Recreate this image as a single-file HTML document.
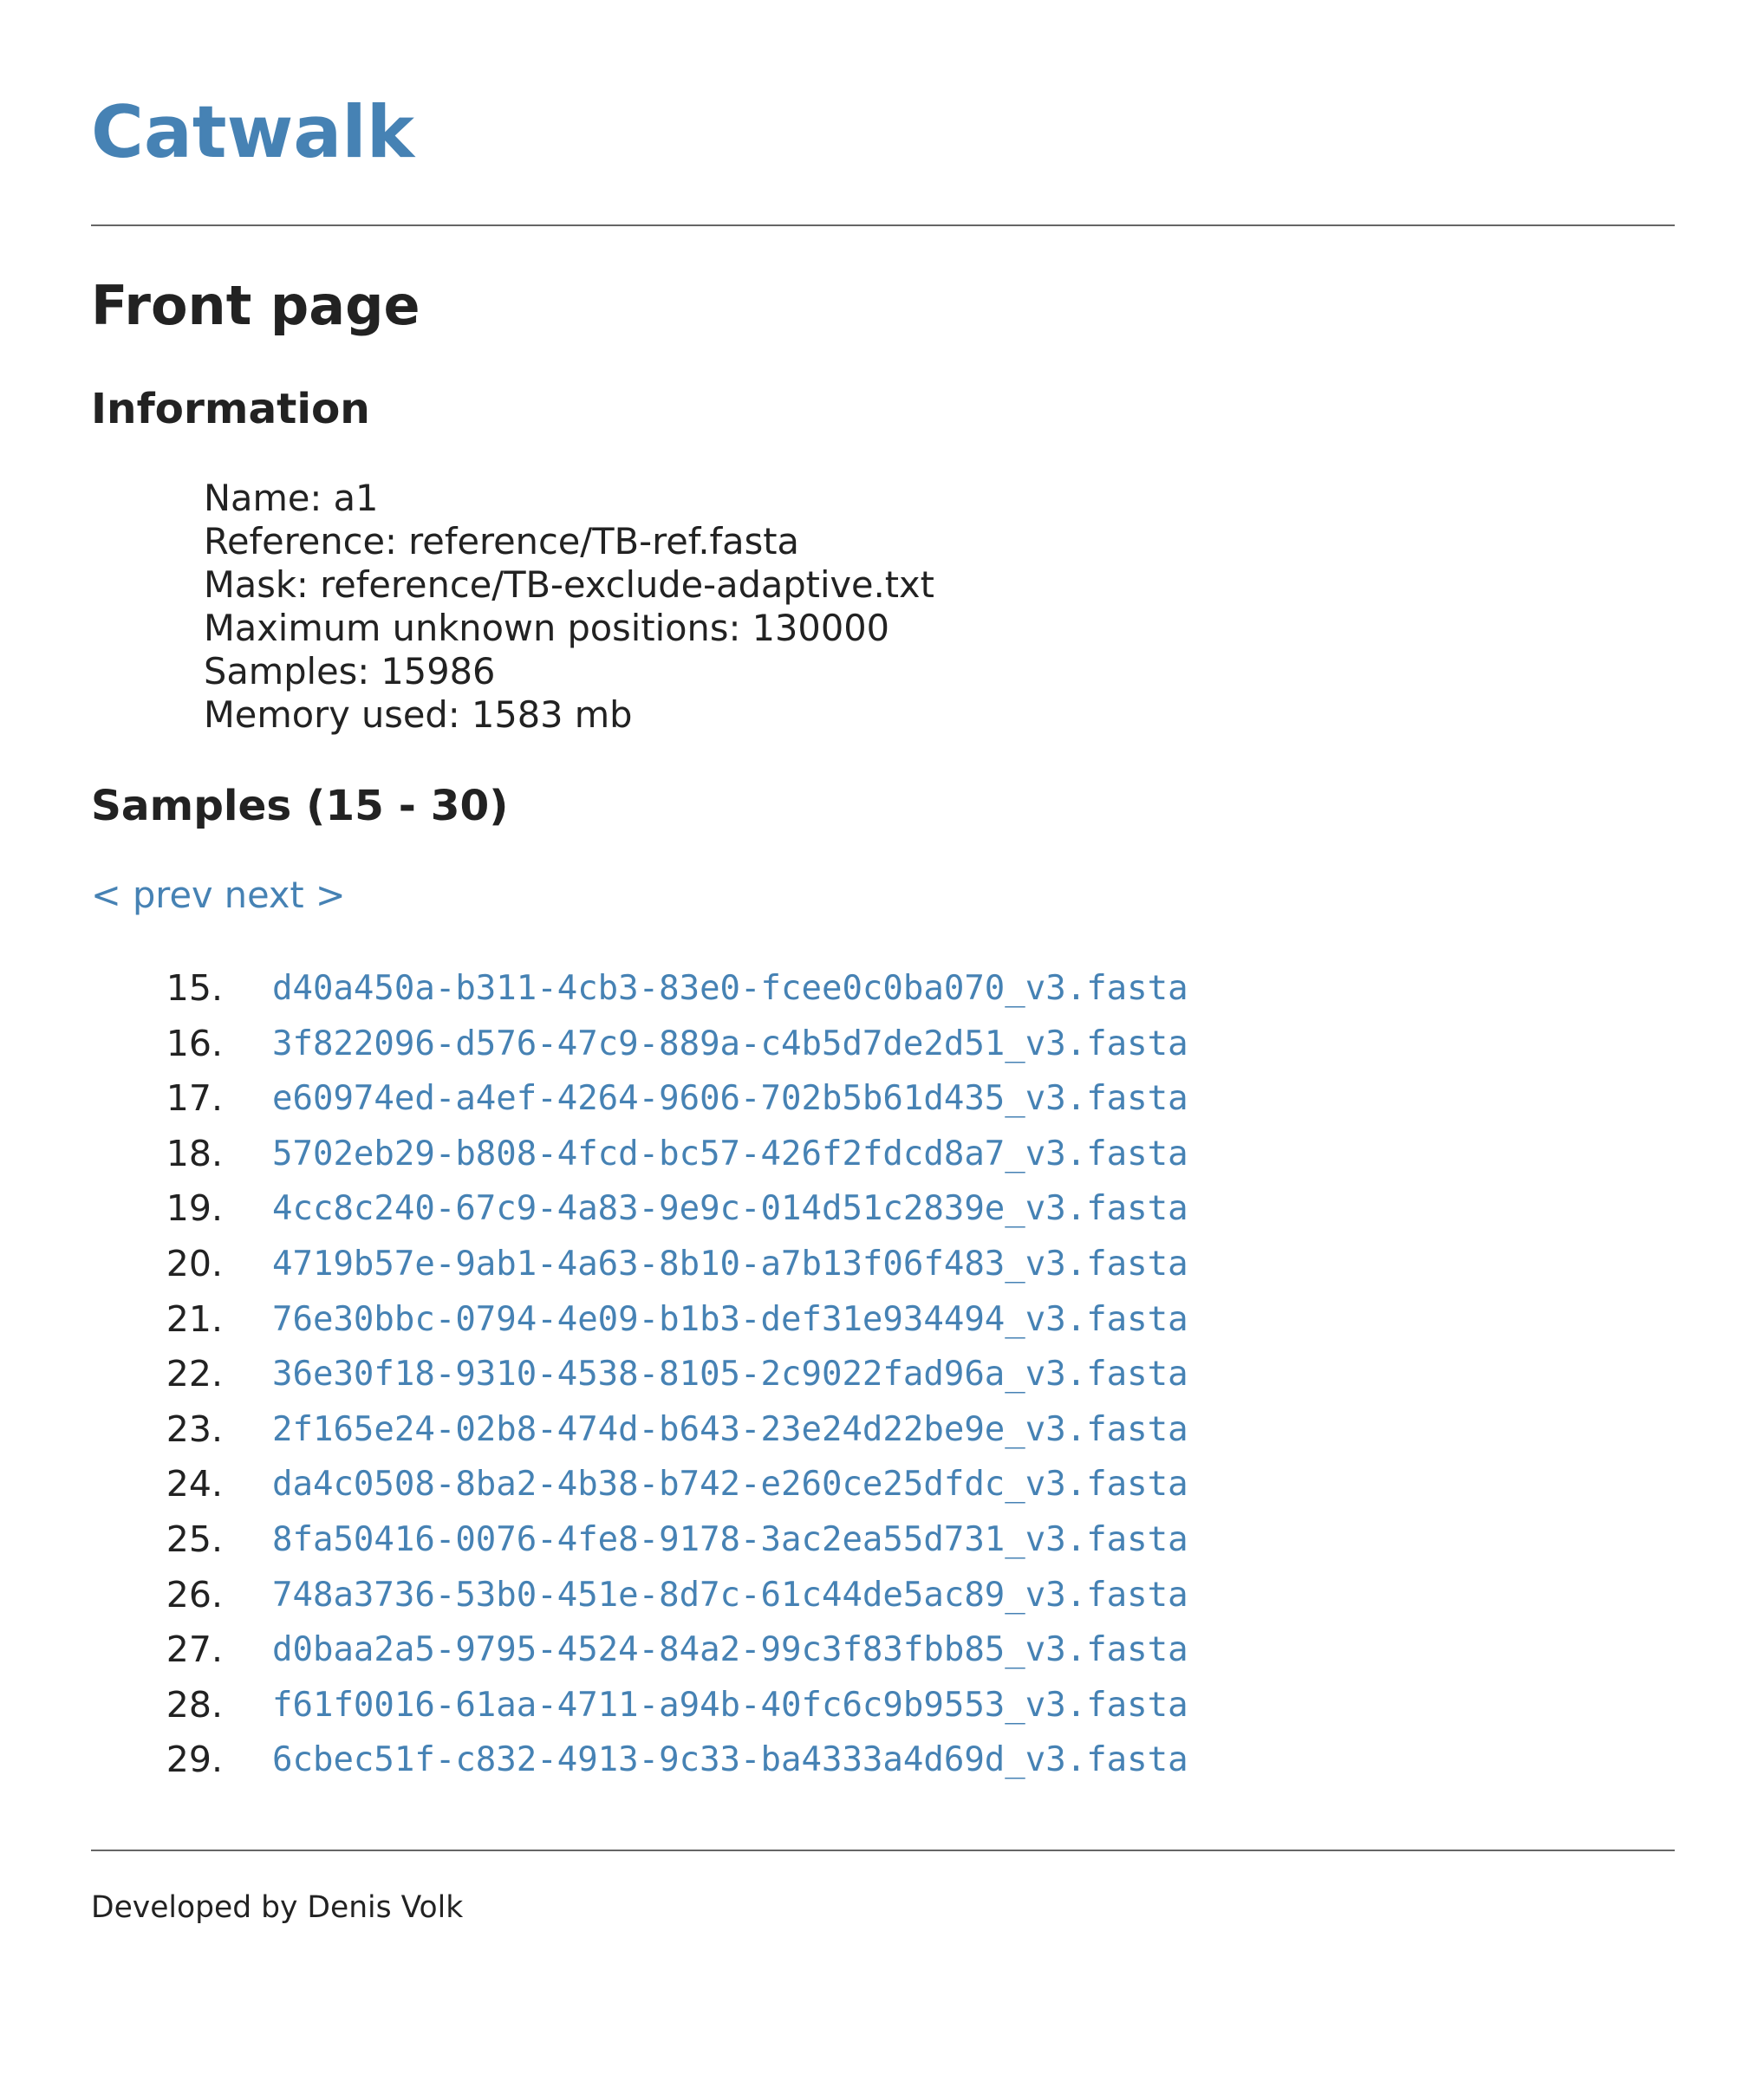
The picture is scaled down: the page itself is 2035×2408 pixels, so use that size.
<!DOCTYPE html>
<html><head><meta charset="utf-8"><style>
body{margin:0;width:2035px;height:2408px;background:#fff;position:relative;font-family:"DejaVu Sans","Liberation Sans",sans-serif;color:#222;}
.a{position:absolute;left:105px;white-space:nowrap;}
.hr{position:absolute;left:105px;width:1833px;height:2px;background:#666;}
.b{font-weight:bold;}
a{color:#4682b4;text-decoration:none;}
.info{left:235px;font-size:41.5px;line-height:50px;}
.list{font-size:41px;line-height:63.6px;}
.row{position:relative;height:63.6px;}
.num{position:absolute;left:0;width:257px;text-align:right;}
.lnk{position:absolute;left:314px;font-family:"DejaVu Sans Mono","Liberation Mono",monospace;font-size:39px;}
</style></head><body>
<div class="a b" style="top:104px;font-size:83px;line-height:97px;color:#4682b4">Catwalk</div>
<div class="hr" style="top:259px;width:1827px"></div>
<div class="a b" style="top:317px;font-size:62px;line-height:72px">Front page</div>
<div class="a b" style="top:444px;font-size:48.5px;line-height:56px">Information</div>
<div class="a info" style="top:550px">Name: a1<br>Reference: reference/TB-ref.fasta<br>Mask: reference/TB-exclude-adaptive.txt<br>Maximum unknown positions: 130000<br>Samples: 15986<br>Memory used: 1583 mb</div>
<div class="a b" style="top:902px;font-size:48.5px;line-height:56px">Samples (15 - 30)</div>
<div class="a" style="top:1008px;font-size:41.5px;line-height:50px"><a>&lt; prev</a> <a>next &gt;</a></div>
<div class="a list" style="top:1109px;left:0;width:1800px">
<div class="row"><span class="num">15.</span><a class="lnk">d40a450a-b311-4cb3-83e0-fcee0c0ba070_v3.fasta</a></div>
<div class="row"><span class="num">16.</span><a class="lnk">3f822096-d576-47c9-889a-c4b5d7de2d51_v3.fasta</a></div>
<div class="row"><span class="num">17.</span><a class="lnk">e60974ed-a4ef-4264-9606-702b5b61d435_v3.fasta</a></div>
<div class="row"><span class="num">18.</span><a class="lnk">5702eb29-b808-4fcd-bc57-426f2fdcd8a7_v3.fasta</a></div>
<div class="row"><span class="num">19.</span><a class="lnk">4cc8c240-67c9-4a83-9e9c-014d51c2839e_v3.fasta</a></div>
<div class="row"><span class="num">20.</span><a class="lnk">4719b57e-9ab1-4a63-8b10-a7b13f06f483_v3.fasta</a></div>
<div class="row"><span class="num">21.</span><a class="lnk">76e30bbc-0794-4e09-b1b3-def31e934494_v3.fasta</a></div>
<div class="row"><span class="num">22.</span><a class="lnk">36e30f18-9310-4538-8105-2c9022fad96a_v3.fasta</a></div>
<div class="row"><span class="num">23.</span><a class="lnk">2f165e24-02b8-474d-b643-23e24d22be9e_v3.fasta</a></div>
<div class="row"><span class="num">24.</span><a class="lnk">da4c0508-8ba2-4b38-b742-e260ce25dfdc_v3.fasta</a></div>
<div class="row"><span class="num">25.</span><a class="lnk">8fa50416-0076-4fe8-9178-3ac2ea55d731_v3.fasta</a></div>
<div class="row"><span class="num">26.</span><a class="lnk">748a3736-53b0-451e-8d7c-61c44de5ac89_v3.fasta</a></div>
<div class="row"><span class="num">27.</span><a class="lnk">d0baa2a5-9795-4524-84a2-99c3f83fbb85_v3.fasta</a></div>
<div class="row"><span class="num">28.</span><a class="lnk">f61f0016-61aa-4711-a94b-40fc6c9b9553_v3.fasta</a></div>
<div class="row"><span class="num">29.</span><a class="lnk">6cbec51f-c832-4913-9c33-ba4333a4d69d_v3.fasta</a></div>
</div>
<div class="hr" style="top:2134px;width:1827px"></div>
<div class="a" style="top:2181px;font-size:34.5px;line-height:40px">Developed by Denis Volk</div>
</body></html>
